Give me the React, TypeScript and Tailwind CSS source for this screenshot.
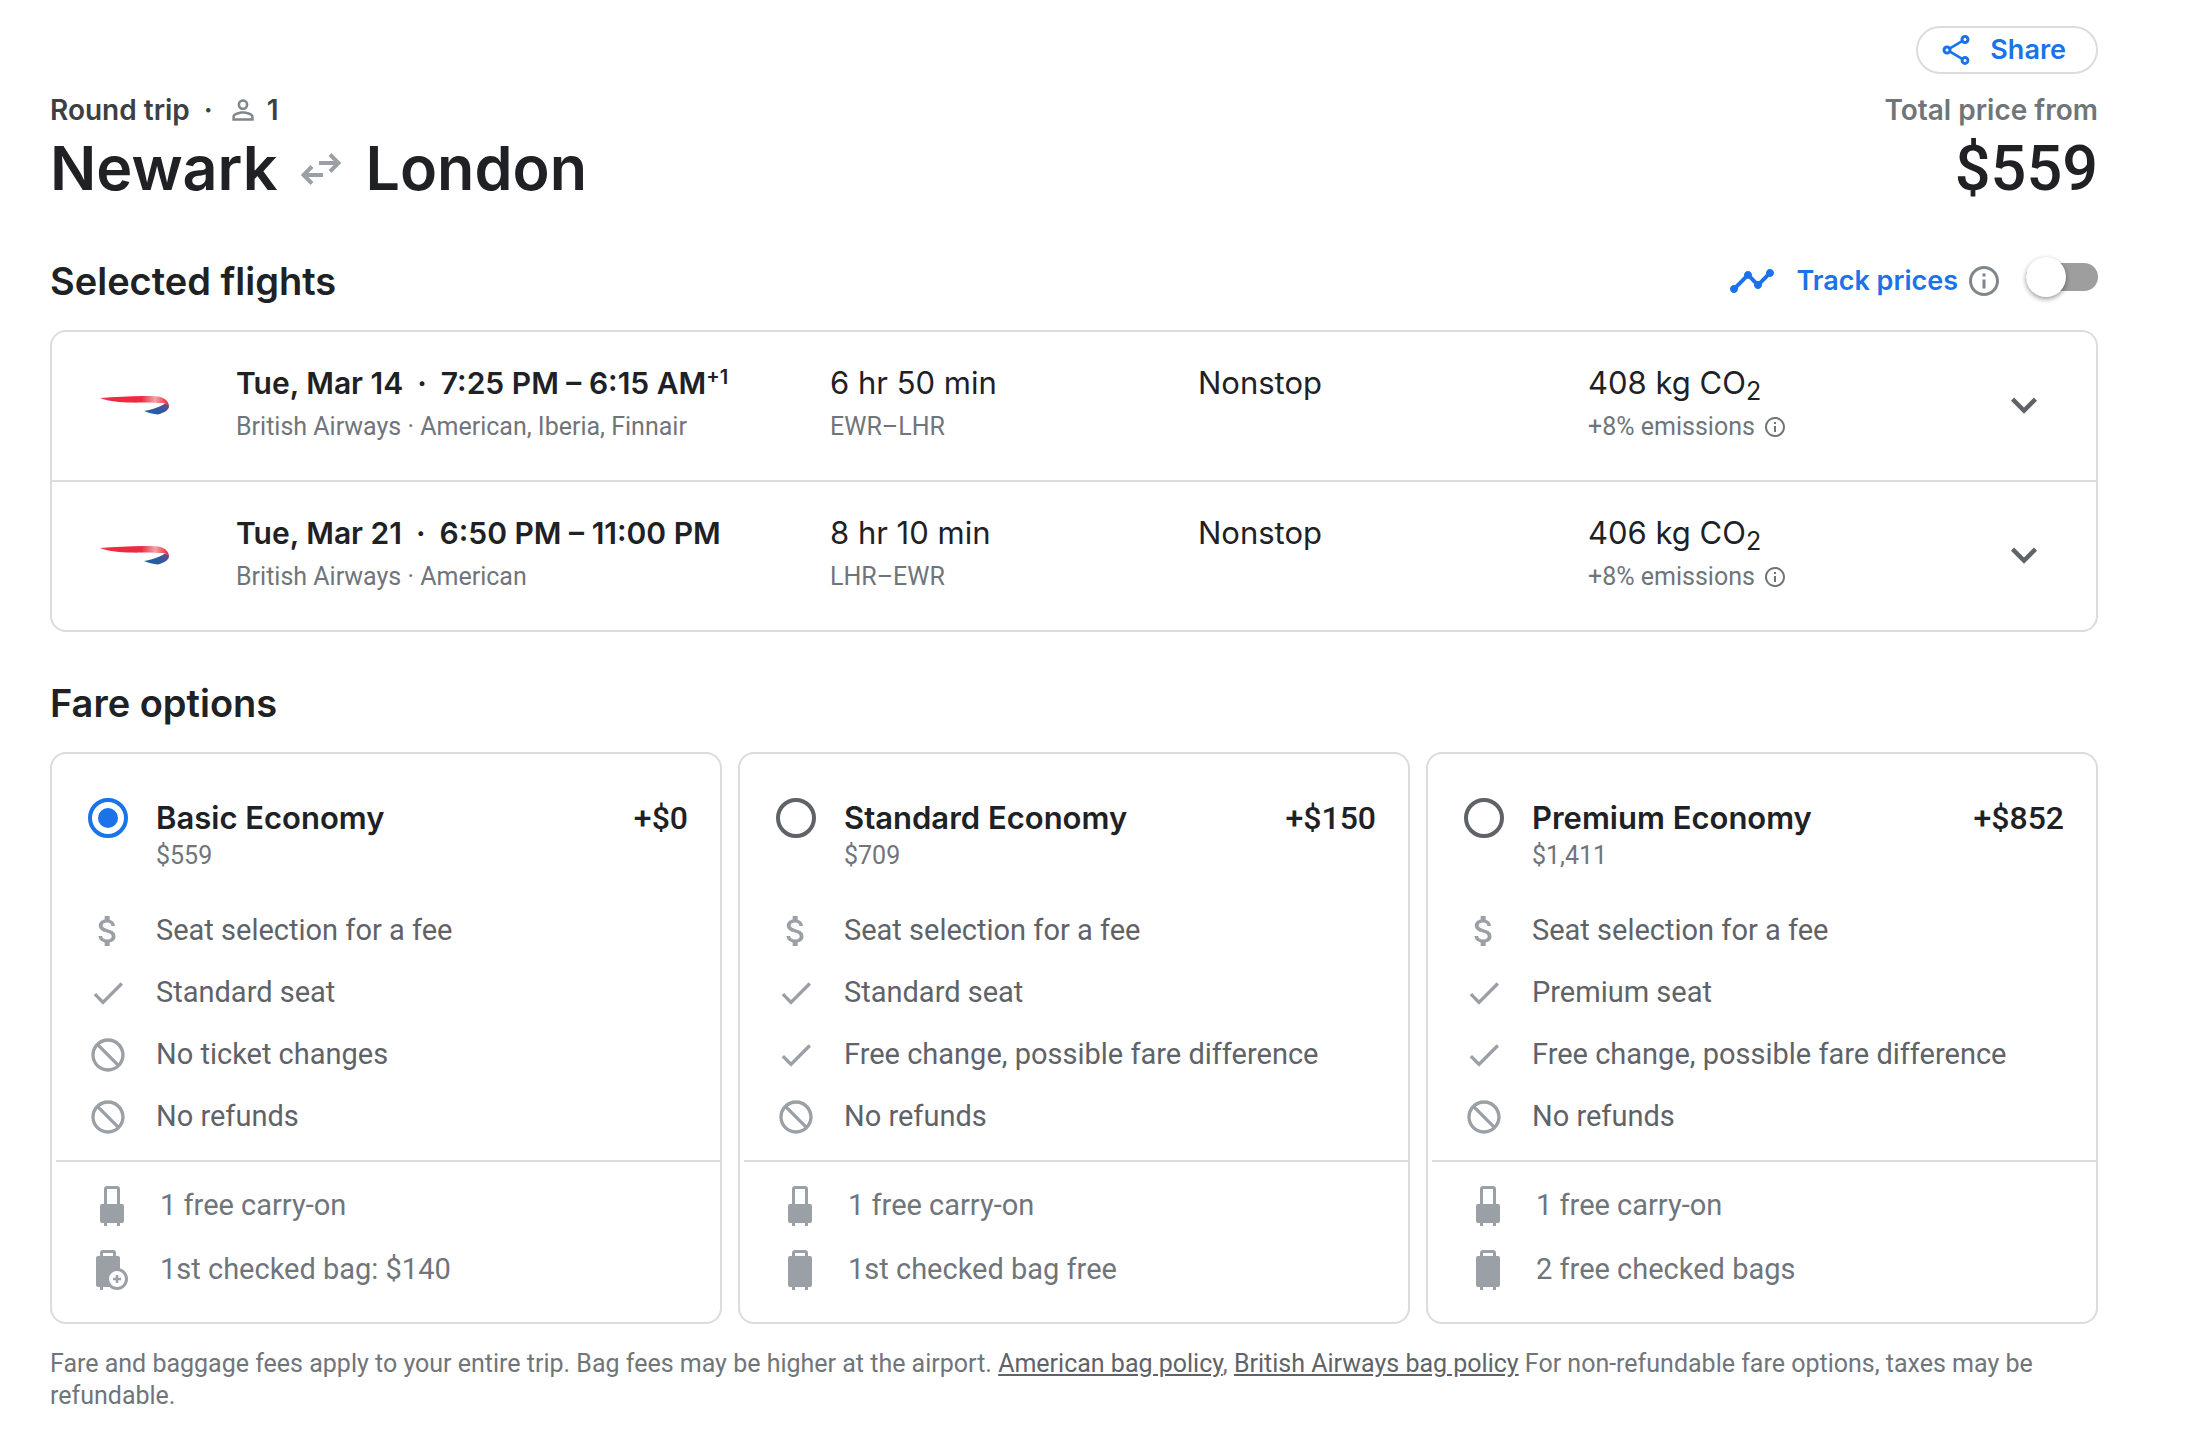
import { useState } from "react";
import {
  MdAttachMoney,
  MdBlock,
  MdCheck,
  MdExpandMore,
  MdInfoOutline,
  MdOutlineShare,
  MdPersonOutline,
  MdTimeline,
} from "react-icons/md";

type Flight = {
  id: string;
  date: string;
  time: string;
  plusDays?: string;
  airlines: string;
  duration: string;
  route: string;
  co2: string;
};

type FeatureIcon = "fee" | "yes" | "no";
type BagIcon = "carryOn" | "checked" | "checkedFee";

type Fare = {
  id: string;
  name: string;
  price: string;
  extra: string;
  features: { icon: FeatureIcon; text: string }[];
  bags: { icon: BagIcon; text: string }[];
};

const flights: Flight[] = [
  {
    id: "outbound",
    date: "Tue, Mar 14",
    time: "7:25 PM – 6:15 AM",
    plusDays: "+1",
    airlines: "British Airways · American, Iberia, Finnair",
    duration: "6 hr 50 min",
    route: "EWR–LHR",
    co2: "408 kg CO",
  },
  {
    id: "return",
    date: "Tue, Mar 21",
    time: "6:50 PM – 11:00 PM",
    airlines: "British Airways · American",
    duration: "8 hr 10 min",
    route: "LHR–EWR",
    co2: "406 kg CO",
  },
];

const fares: Fare[] = [
  {
    id: "basic",
    name: "Basic Economy",
    price: "$559",
    extra: "+$0",
    features: [
      { icon: "fee", text: "Seat selection for a fee" },
      { icon: "yes", text: "Standard seat" },
      { icon: "no", text: "No ticket changes" },
      { icon: "no", text: "No refunds" },
    ],
    bags: [
      { icon: "carryOn", text: "1 free carry-on" },
      { icon: "checkedFee", text: "1st checked bag: $140" },
    ],
  },
  {
    id: "standard",
    name: "Standard Economy",
    price: "$709",
    extra: "+$150",
    features: [
      { icon: "fee", text: "Seat selection for a fee" },
      { icon: "yes", text: "Standard seat" },
      { icon: "yes", text: "Free change, possible fare difference" },
      { icon: "no", text: "No refunds" },
    ],
    bags: [
      { icon: "carryOn", text: "1 free carry-on" },
      { icon: "checked", text: "1st checked bag free" },
    ],
  },
  {
    id: "premium",
    name: "Premium Economy",
    price: "$1,411",
    extra: "+$852",
    features: [
      { icon: "fee", text: "Seat selection for a fee" },
      { icon: "yes", text: "Premium seat" },
      { icon: "yes", text: "Free change, possible fare difference" },
      { icon: "no", text: "No refunds" },
    ],
    bags: [
      { icon: "carryOn", text: "1 free carry-on" },
      { icon: "checked", text: "2 free checked bags" },
    ],
  },
];

const featureIcons = {
  fee: MdAttachMoney,
  yes: MdCheck,
  no: MdBlock,
};

const SwapArrows = () => (
  <svg viewBox="0 0 40 32" className="h-8 w-10 text-[#9aa0a6]" fill="none" stroke="currentColor" strokeWidth="4">
    <path d="M18 10h19M29 1.5l8.500 8.500-8.500 8.500" />
    <path d="M22 22H3M11 13.500L2.500 22l8.500 8.500" />
  </svg>
);

const AirlineLogo = ({ id }: { id: string }) => (
  <svg viewBox="0 0 70 20" className="h-5 w-[70px]" role="img" aria-label="British Airways">
    <defs>
      <linearGradient id={`red-${id}`} x1="0" x2="1" y1="0" y2="0">
        <stop offset="0" stopColor="#e8455a" />
        <stop offset="0.15" stopColor="#ee2a41" />
        <stop offset="0.6" stopColor="#ee2a41" />
        <stop offset="0.8" stopColor="#f3a3a8" />
        <stop offset="0.92" stopColor="#ef5563" />
        <stop offset="1" stopColor="#e02a40" />
      </linearGradient>
      <linearGradient id={`blue-${id}`} x1="0" x2="1" y1="1" y2="0">
        <stop offset="0" stopColor="#0f66b0" />
        <stop offset="0.6" stopColor="#3c559c" />
        <stop offset="1" stopColor="#6b4a8c" />
      </linearGradient>
    </defs>
    <path d="M44 16C52 14.500 60 12 65 8.500c2 .5 4 1 4 3 0 3-4 6-11 8-5-.5-10-1.500-14-3.500z" fill={`url(#blue-${id})`} />
    <path d="M0 3c14-1 30-2 44-2 9 0 16 0 20 2.500 3 2 5 4.500 5 8-1.500-2-3-3-6-3.500-10-.4-24 0-36-.5C16 7 6 5.500 0 3z" fill={`url(#red-${id})`} />
  </svg>
);

const BagGlyph = ({ icon }: { icon: BagIcon }) => {
  if (icon === "carryOn") {
    return (
      <svg viewBox="0 0 40 40" className="size-10" fill="currentColor">
        <path d="M12 18V3q0-3 3-3h10q3 0 3 3v15h2q2 0 2 2v15q0 2-2 2h-2v3h-3v-3H15v3h-3v-3h-2q-2 0-2-2V20q0-2 2-2zm3 0h10V3H15z" />
      </svg>
    );
  }
  if (icon === "checked") {
    return (
      <svg viewBox="0 0 40 40" className="size-10" fill="currentColor">
        <path d="M12 6V3q0-3 3-3h10q3 0 3 3v3h2q2 0 2 2v27q0 2-2 2h-2v3h-3v-3H15v3h-3v-3h-2q-2 0-2-2V8q0-2 2-2zm3 0h10V3H15z" />
      </svg>
    );
  }
  return (
    <svg viewBox="0 0 40 40" className="size-10">
      <path d="M8 6V3q0-3 3-3h10q3 0 3 3v3h2q2 0 2 2v29H11v3H8v-3H6q-2 0-2-2V8q0-2 2-2zm3 0h10V3H11z" fill="currentColor" />
      <circle cx="25" cy="29" r="9.500" fill="white" stroke="currentColor" strokeWidth="3" />
      <path d="M25 25v8M21 29h8" stroke="currentColor" strokeWidth="2.500" />
    </svg>
  );
};

const Header = () => (
  <header className="flex items-end justify-between">
    <div>
      <div className="flex h-9 items-center font-[Inter] text-[28px] font-semibold text-[#3c4043]">
        <span>Round trip</span>
        <span className="px-3.5">·</span>
        <MdPersonOutline className="mr-2 size-8 text-[#80868b]" />
        <span>1</span>
      </div>
      <h1 className="flex h-[82px] items-center gap-6 font-[Inter] text-[61px] font-semibold">
        Newark
        <SwapArrows />
        London
      </h1>
    </div>
    <div className="flex flex-col items-end">
      <button className="mb-[18px] flex h-12 items-center gap-4 rounded-full border-2 border-[#dadce0] pr-[30px] pl-5 font-[Inter] text-[27px] font-semibold text-[#1a73e8]">
        <MdOutlineShare className="size-9" />
        Share
      </button>
      <div className="font-[Inter] text-[28px] leading-9 font-semibold text-[#70757a]">Total price from</div>
      <div className="text-[63px] leading-[82px] font-medium">$559</div>
    </div>
  </header>
);

const TrackPrices = () => {
  const [tracking, setTracking] = useState(false);

  return (
    <div className="flex items-center">
      <MdTimeline className="mr-5 size-12 text-[#1a73e8]" />
      <label htmlFor="track" className="font-[Inter] text-[27px] font-semibold text-[#1a73e8]">
        Track prices
      </label>
      <button aria-label="About price tracking" className="mr-6 ml-2">
        <MdInfoOutline className="size-9 text-[#80868b]" />
      </button>
      <input
        id="track"
        type="checkbox"
        role="switch"
        checked={tracking}
        onChange={(e) => setTracking(e.target.checked)}
        className="relative mb-2 h-7 w-18 appearance-none rounded-full bg-[#9e9e9e] before:absolute before:-top-1.5 before:left-0 before:size-10 before:rounded-full before:bg-white before:shadow-[0_2px_5px_rgba(0,0,0,0.4)] checked:bg-[#8ab4f8] checked:before:left-8 checked:before:bg-[#1a73e8]"
      />
    </div>
  );
};

const FlightRow = ({ flight }: { flight: Flight }) => (
  <li className="grid grid-cols-[184fr_594fr_368fr_390fr_508fr] pt-[29px] pb-[31px]">
    <div className="flex items-center pl-12">
      <AirlineLogo id={flight.id} />
    </div>
    <div>
      <div className="font-[Inter] text-[30px] leading-11 font-semibold">
        {flight.date}
        <span className="px-3.5">·</span>
        {flight.time}
        {flight.plusDays && <sup className="text-[20px]">{flight.plusDays}</sup>}
      </div>
      <div className="text-[25px] leading-11 text-[#70757a]">{flight.airlines}</div>
    </div>
    <div>
      <div className="font-[Inter] text-[31px] leading-11">{flight.duration}</div>
      <div className="text-[25px] leading-11 text-[#70757a]">{flight.route}</div>
    </div>
    <div className="font-[Inter] text-[31px] leading-11">Nonstop</div>
    <div className="flex items-center justify-between pr-[46px]">
      <div>
        <div className="font-[Inter] text-[31px] leading-11">
          {flight.co2}
          <sub className="text-[25px]">2</sub>
        </div>
        <div className="flex items-center gap-2 text-[25px] leading-11 text-[#70757a]">
          +8% emissions
          <MdInfoOutline className="size-6" />
        </div>
      </div>
      <button aria-label="Flight details">
        <MdExpandMore className="size-13 text-[#5f6368]" />
      </button>
    </div>
  </li>
);

const FareCard = ({ fare, selected, onSelect }: { fare: Fare; selected: boolean; onSelect: () => void }) => (
  <div className="rounded-2xl border-2 border-[#dadce0]">
    <div className="flex items-start gap-7 pt-10 pr-8 pl-9">
      <input
        id={fare.id}
        type="radio"
        name="fare"
        checked={selected}
        onChange={onSelect}
        className="mt-1 grid size-10 shrink-0 appearance-none place-items-center rounded-full border-4 border-[#5f6368] checked:border-[#1a73e8] checked:before:size-5 checked:before:rounded-full checked:before:bg-[#1a73e8]"
      />
      <label htmlFor={fare.id} className="flex-1">
        <span className="block font-[Inter] text-[31px] leading-12 font-semibold">{fare.name}</span>
        <span className="block text-[25px] leading-7 text-[#70757a]">{fare.price}</span>
      </label>
      <span className="text-[32px] leading-12 font-medium">{fare.extra}</span>
    </div>
    <ul className="mt-[30px] pb-3 pl-9 text-[29px] text-[#5f6368]">
      {fare.features.map((feature) => {
        const Icon = featureIcons[feature.icon];
        return (
          <li key={feature.text} className="flex h-[62px] items-center gap-7">
            {/* flipped so the bar of the "no" sign runs from top left to bottom right */}
            <Icon className={feature.icon === "no" ? "size-10 -scale-x-100 text-[#9aa0a6]" : "size-10 text-[#9aa0a6]"} />
            {feature.text}
          </li>
        );
      })}
    </ul>
    <ul className="ml-1 border-t-2 border-[#dadce0] pt-3 pb-5 pl-9 text-[29px] text-[#70757a]">
      {fare.bags.map((bag) => (
        <li key={bag.text} className="flex h-16 items-center gap-7">
          <span className="text-[#9aa0a6]">
            <BagGlyph icon={bag.icon} />
          </span>
          {bag.text}
        </li>
      ))}
    </ul>
  </div>
);

const App = () => {
  const [selectedFare, setSelectedFare] = useState("basic");

  return (
    <main className="min-h-screen bg-white pt-[26px] pr-28 pb-10 pl-[50px] font-[Roboto,sans-serif] text-[#202124]">
      <Header />

      {/* Selected flights */}
      <section className="mt-12">
        <div className="flex h-[46px] items-center justify-between">
          <h2 className="font-[Inter] text-[38px] font-semibold">Selected flights</h2>
          <TrackPrices />
        </div>
        <ul className="mt-[26px] divide-y-2 divide-[#dadce0] rounded-2xl border-2 border-[#dadce0]">
          {flights.map((flight) => (
            <FlightRow key={flight.id} flight={flight} />
          ))}
        </ul>
      </section>

      {/* Fare options */}
      <section className="mt-12">
        <h2 className="font-[Inter] text-[38px] leading-[46px] font-semibold">Fare options</h2>
        <div className="mt-[26px] grid grid-cols-3 gap-4">
          {fares.map((fare) => (
            <FareCard
              key={fare.id}
              fare={fare}
              selected={fare.id === selectedFare}
              onSelect={() => setSelectedFare(fare.id)}
            />
          ))}
        </div>
      </section>

      <p className="mt-6 text-[25px] leading-8 text-[#70757a]">
        Fare and baggage fees apply to your entire trip. Bag fees may be higher at the airport.{" "}
        <a href="#american" className="text-[#5f6368] underline">American bag policy</a>,{" "}
        <a href="#british-airways" className="text-[#5f6368] underline">British Airways bag policy</a>{" "}
        For non-refundable fare options, taxes may be refundable.
      </p>
    </main>
  );
};

export default App;
